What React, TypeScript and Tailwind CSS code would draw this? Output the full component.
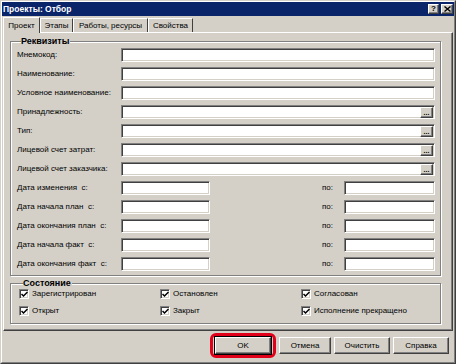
import React from "react";

const sunken =
  "border border-t-[#808080] border-l-[#808080] border-r-white border-b-white bg-white shadow-[inset_1px_1px_0_#404040,inset_-1px_-1px_0_#d4d0c8]";
const raised =
  "border border-t-white border-l-white border-r-[#404040] border-b-[#404040] bg-[#d4d0c8] shadow-[inset_-1px_-1px_0_#808080]";

const fields = [
  { label: "Мнемокод:", pick: false },
  { label: "Наименование:", pick: false },
  { label: "Условное наименование:", pick: false },
  { label: "Принадлежность:", pick: true },
  { label: "Тип:", pick: true },
  { label: "Лицевой счет затрат:", pick: true },
  { label: "Лицевой счет заказчика:", pick: true },
];

const dates = [
  "Дата изменения  с:",
  "Дата начала план  с:",
  "Дата окончания план  с:",
  "Дата начала факт  с:",
  "Дата окончания факт  с:",
];

const states = [
  ["Зарегистрирован", "Остановлен", "Согласован"],
  ["Открыт", "Закрыт", "Исполнение прекращено"],
];

const tabs = [
  { label: "Проект", w: "w-[37px]", active: true },
  { label: "Этапы", w: "w-[33px]", active: false },
  { label: "Работы, ресурсы", w: "w-[75px]", active: false },
  { label: "Свойства", w: "w-[45px]", active: false },
];

const Check = ({ label }: { label: string }) => (
  <div className="flex h-[10px] items-center gap-[3px]">
    <div className={`flex h-[10px] w-[10px] items-center justify-center ${sunken}`}>
      <svg width="7" height="7" viewBox="0 0 7 7">
        <path d="M0.5 3 L2.5 5 L6.5 1" stroke="#000" strokeWidth="1.5" fill="none" />
      </svg>
    </div>
    <span className="whitespace-pre">{label}</span>
  </div>
);

const Btn = ({ label, w, def }: { label: string; w: string; def?: boolean }) => (
  <div
    className={`flex h-[17px] items-center justify-center ${raised} ${w} ${
      def ? "outline outline-1 outline-black" : ""
    }`}
  >
    {label}
  </div>
);

export default function App() {
  return (
    <div
      className="h-[364px] w-[456px] border border-t-[#d4d0c8] border-l-[#d4d0c8] border-r-[#404040] border-b-[#404040] bg-[#d4d0c8] text-[8px] text-black"
      style={{ fontFamily: '"Liberation Sans", Arial, sans-serif' }}
    >
      <div className="flex h-full flex-col border border-t-white border-l-white border-r-[#808080] border-b-[#808080]">
        {/* title */}
        <div className="flex h-[14px] items-center justify-between bg-[#0a246a] pl-[1px] pr-[1px]">
          <span className="text-[8.5px] font-bold text-white">Проекты: Отбор</span>
          <div className="flex gap-[2px]">
            <div className={`flex h-[10px] w-[11px] items-center justify-center text-[8px] font-bold leading-none ${raised}`}>
              ?
            </div>
            <div className={`flex h-[10px] w-[12px] items-center justify-center ${raised}`}>
              <svg width="7" height="6" viewBox="0 0 7 6">
                <path d="M0.5 0.5 L6.5 5.5 M6.5 0.5 L0.5 5.5" stroke="#000" strokeWidth="1.4" />
              </svg>
            </div>
          </div>
        </div>

        {/* tabs */}
        <div className="ml-[1px] mt-[1px] flex h-[15px] items-end">
          {tabs.map((t) => (
            <div
              key={t.label}
              className={`${t.w} flex items-center border-l border-t border-r border-l-white border-t-white border-r-[#404040] ${
                t.active
                  ? "relative z-10 -mb-[1px] h-[16px] justify-center bg-[#d4d0c8]"
                  : "h-[14px] justify-center"
              }`}
            >
              {t.label}
            </div>
          ))}
        </div>

        {/* panel */}
        <div className="mx-[1px] flex h-[299px] flex-col border border-t-white border-l-white border-r-[#404040] border-b-[#404040] px-[6px] pt-[3px] shadow-[inset_-1px_-1px_0_#808080]">
          <fieldset className="ml-0 mr-[5px] border border-[#808080] pb-[4px] pl-[6px] pr-[5px] shadow-[1px_1px_0_white,inset_1px_1px_0_white]">
            <legend className="ml-[4px] bg-[#d4d0c8] pr-[1px] text-[9px] font-bold leading-[11px]">Реквизиты</legend>
            <div className="mt-[1px] flex flex-col gap-[5px]">
              {fields.map((f) => (
                <div key={f.label} className="flex h-[14px] items-center">
                  <span className="w-[104px] shrink-0">{f.label}</span>
                  <div className={`flex h-[14px] flex-1 items-center justify-end pr-[1px] ${sunken}`}>
                    {f.pick && (
                      <div className={`flex h-[11px] w-[13px] items-center justify-center text-[7px] font-bold leading-none ${raised}`}>
                        ...
                      </div>
                    )}
                  </div>
                </div>
              ))}
              {dates.map((d) => (
                <div key={d} className="flex h-[14px] items-center">
                  <span className="w-[104px] shrink-0 whitespace-pre">{d}</span>
                  <div className={`h-[14px] w-[89px] ${sunken}`} />
                  <span className="flex-1 pr-[11px] text-right">по:</span>
                  <div className={`h-[14px] w-[91px] ${sunken}`} />
                </div>
              ))}
            </div>
          </fieldset>

          <fieldset className="mr-[5px] mt-[2px] border border-[#808080] pb-[7px] pl-[8px] shadow-[1px_1px_0_white,inset_1px_1px_0_white]">
            <legend className="ml-[4px] bg-[#d4d0c8] pr-[1px] text-[9px] font-bold leading-[11px]">Состояние</legend>
            <div className="flex flex-col gap-[7px]">
              {states.map((row, i) => (
                <div key={i} className="grid grid-cols-[141px_141px_1fr]">
                  {row.map((s) => (
                    <Check key={s} label={s} />
                  ))}
                </div>
              ))}
            </div>
          </fieldset>
        </div>

        {/* buttons */}
        <div className="mt-[2px] flex items-center justify-end gap-[3px] pr-[5px]">
          <div className="rounded-[6px] border-[3px] border-[#e0001a] px-[2px] py-[1px]">
            <Btn label="OK" w="w-[56px]" def />
          </div>
          <Btn label="Отмена" w="w-[52px]" />
          <Btn label="Очистить" w="w-[56px]" />
          <Btn label="Справка" w="w-[56px]" />
        </div>
      </div>
    </div>
  );
}
